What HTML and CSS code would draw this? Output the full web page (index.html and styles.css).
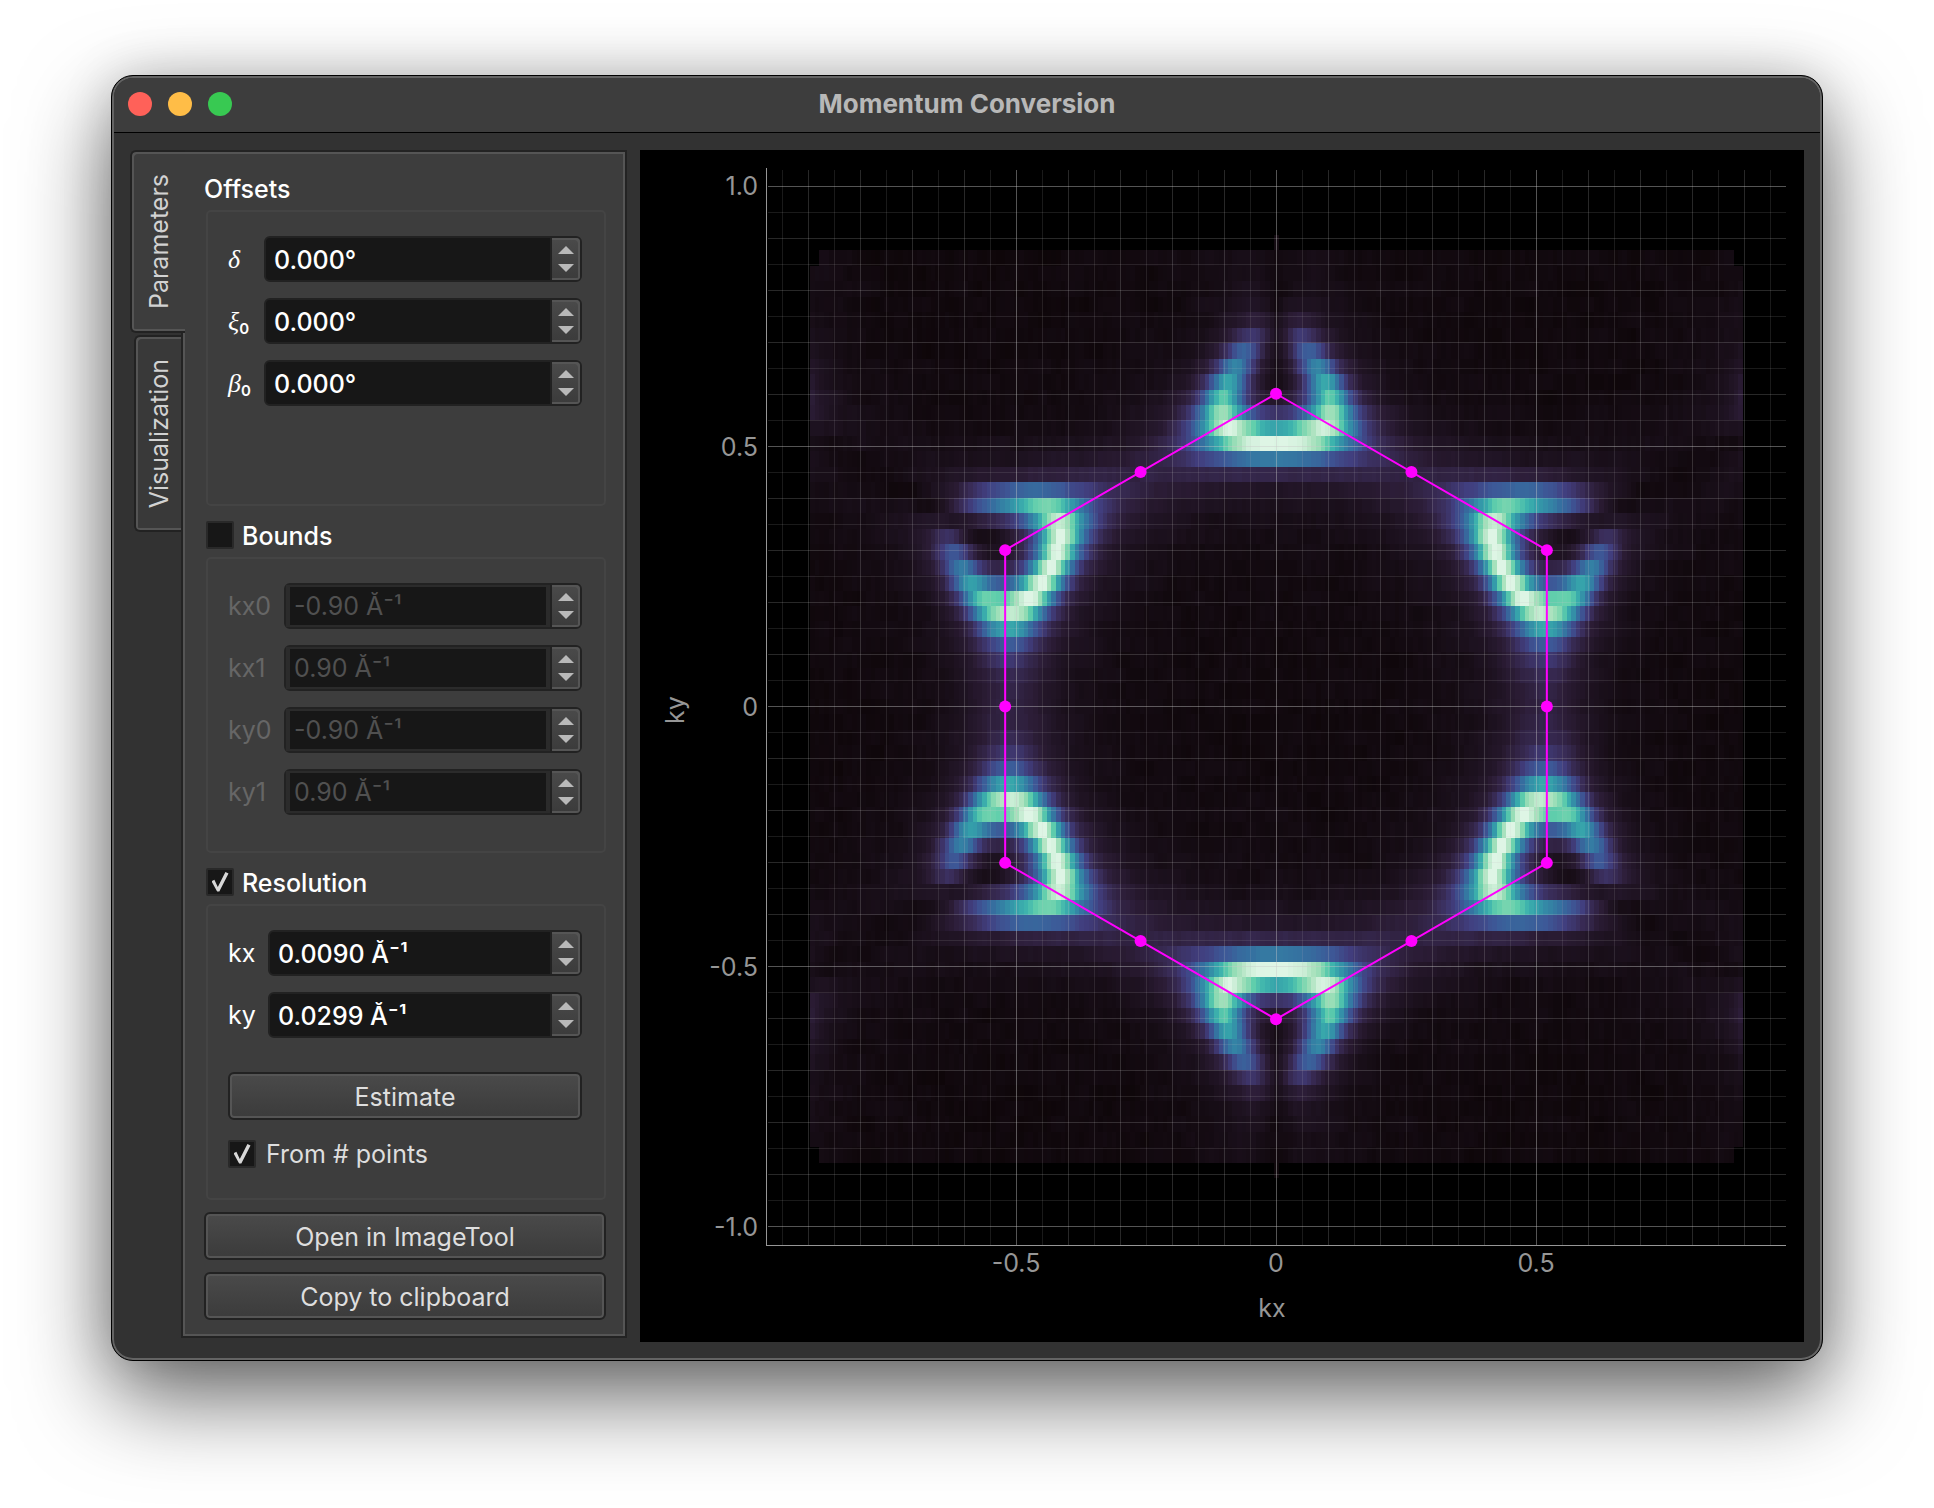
FILE: index.html
```html
<!DOCTYPE html>
<html lang="en">
<head>
  <meta charset="UTF-8">
  <meta name="viewport" content="width=device-width, initial-scale=1.0">
  <title>Momentum Conversion</title>
  <link rel="stylesheet" href="styles.css">
</head>
<body>

  <div class="window">
    <header class="titlebar">
      <div class="lights">
        <button class="light red" aria-label="Close"></button>
        <button class="light yellow" aria-label="Minimize"></button>
        <button class="light green" aria-label="Zoom"></button>
      </div>
      <h1>Momentum Conversion</h1>
    </header>

    <main class="workspace">
      <nav class="tabs">
        <button class="tab active"><span>Parameters</span></button>
        <button class="tab"><span>Visualization</span></button>
      </nav>

      <div class="panel">
        <section class="section">
          <div class="section-head"><h2>Offsets</h2></div>
          <div class="group">
            <div class="form greek">
              <label for="delta"><i>δ</i></label>
              <div class="spin">
                <input type="text" id="delta" value="0.000°">
                <div class="steps"><button class="up" aria-label="Up"></button><button class="down" aria-label="Down"></button></div>
              </div>
              <label for="xi"><i>ξ</i><sub>0</sub></label>
              <div class="spin">
                <input type="text" id="xi" value="0.000°">
                <div class="steps"><button class="up" aria-label="Up"></button><button class="down" aria-label="Down"></button></div>
              </div>
              <label for="beta"><i>β</i><sub>0</sub></label>
              <div class="spin">
                <input type="text" id="beta" value="0.000°">
                <div class="steps"><button class="up" aria-label="Up"></button><button class="down" aria-label="Down"></button></div>
              </div>
            </div>
          </div>
        </section>

        <section class="section">
          <div class="section-head">
            <input type="checkbox" class="check" id="bounds">
            <label for="bounds">Bounds</label>
          </div>
          <div class="group disabled">
            <div class="form bounds">
              <label for="kx0">kx0</label>
              <div class="spin">
                <input type="text" id="kx0" value="-0.90 Å⁻¹" disabled>
                <div class="steps"><button class="up" aria-label="Up"></button><button class="down" aria-label="Down"></button></div>
              </div>
              <label for="kx1">kx1</label>
              <div class="spin">
                <input type="text" id="kx1" value="0.90 Å⁻¹" disabled>
                <div class="steps"><button class="up" aria-label="Up"></button><button class="down" aria-label="Down"></button></div>
              </div>
              <label for="ky0">ky0</label>
              <div class="spin">
                <input type="text" id="ky0" value="-0.90 Å⁻¹" disabled>
                <div class="steps"><button class="up" aria-label="Up"></button><button class="down" aria-label="Down"></button></div>
              </div>
              <label for="ky1">ky1</label>
              <div class="spin">
                <input type="text" id="ky1" value="0.90 Å⁻¹" disabled>
                <div class="steps"><button class="up" aria-label="Up"></button><button class="down" aria-label="Down"></button></div>
              </div>
            </div>
          </div>
        </section>

        <section class="section">
          <div class="section-head">
            <input type="checkbox" class="check" id="resolution" checked>
            <label for="resolution">Resolution</label>
          </div>
          <div class="group">
            <div class="form">
              <label for="kx">kx</label>
              <div class="spin">
                <input type="text" id="kx" value="0.0090 Å⁻¹">
                <div class="steps"><button class="up" aria-label="Up"></button><button class="down" aria-label="Down"></button></div>
              </div>
              <label for="ky">ky</label>
              <div class="spin">
                <input type="text" id="ky" value="0.0299 Å⁻¹">
                <div class="steps"><button class="up" aria-label="Up"></button><button class="down" aria-label="Down"></button></div>
              </div>
            </div>
            <button class="btn estimate">Estimate</button>
            <div class="check-row">
              <input type="checkbox" class="check" id="points" checked>
              <label for="points">From # points</label>
            </div>
          </div>
        </section>

        <div class="actions">
          <button class="btn">Open in ImageTool</button>
          <button class="btn">Copy to clipboard</button>
        </div>
      </div>

      <svg class="plot" viewBox="0 0 1164 1192" role="img" aria-label="Constant energy map">
        <g id="map" shape-rendering="crispEdges"></g>
        <g id="grid" shape-rendering="crispEdges"></g>
        <path class="axis" d="M126 18V1095H1146" shape-rendering="crispEdges"/>
        <g class="ticks-y">
          <text x="118" y="45">1.0</text>
          <text x="118" y="306">0.5</text>
          <text x="118" y="566">0</text>
          <text x="118" y="826">-0.5</text>
          <text x="118" y="1086">-1.0</text>
        </g>
        <g class="ticks-x">
          <text x="376" y="1122">-0.5</text>
          <text x="636" y="1122">0</text>
          <text x="896" y="1122">0.5</text>
          <text x="632" y="1167">kx</text>
          <text transform="translate(44 560) rotate(-90)">ky</text>
        </g>
        <g id="zone"></g>
      </svg>
    </main>
  </div>

  <script src="plot.js"></script>
</body>
</html>
```

FILE: styles.css
```css
* {
  box-sizing: border-box;
}

body {
  margin: 0;
  padding: 75px 111px 147px;
  background: #fff;
  color: #fff;
  font-family: Inter, "Liberation Sans", sans-serif;
  font-size: 25px;
  line-height: 28px;
}

h1, h2 {
  margin: 0;
  font-size: inherit;
}

button, input {
  margin: 0;
  padding: 0;
  border: none;
  font: inherit;
}

/* Window */
.window {
  background: #323232;
  border: 1px solid #000;
  border-radius: 22px;
  box-shadow: inset 0 0 0 2px #646464, 0 36px 90px rgba(0, 0, 0, 0.6), 0 0 50px rgba(0, 0, 0, 0.15);
  padding: 2px;
}

.titlebar {
  height: 55px;
  display: grid;
  grid-template-columns: 1fr auto 1fr;
  align-items: center;
  padding: 0 14px 2px;
  background: #3d3d3d;
  border-bottom: 1px solid #000;
  border-radius: 19px 19px 0 0;
}

.titlebar h1 {
  color: #b8b8b8;
  font-size: 26px;
  font-weight: 700;
}

.lights {
  display: flex;
  gap: 16px;
}

.light {
  width: 24px;
  height: 24px;
  border-radius: 50%;
}

.red { background: #ff6159; }
.yellow { background: #ffbd47; }
.green { background: #38c952; }

.workspace {
  display: flex;
  align-items: stretch;
  padding: 17px 16px 16px;
}

/* Tabs */
.tabs {
  display: flex;
  flex-direction: column;
  align-items: flex-end;
  gap: 2px;
  z-index: 1;
}

.tab {
  display: flex;
  align-items: center;
  justify-content: center;
  width: 47px;
  padding: 22px 0;
  color: #d2d2d2;
  background: #393939;
  border: 2px solid #222;
  border-right: none;
  border-radius: 6px 0 0 6px;
  box-shadow: inset 2px 2px 0 #555, inset 0 -2px 0 #555;
}

.tab span {
  writing-mode: vertical-rl;
  transform: rotate(180deg);
}

.tab.active {
  width: 55px;
  margin-right: -4px;
  background: #3d3d3d;
}

/* Parameter panel */
.panel {
  flex: none;
  width: 446px;
  display: flex;
  flex-direction: column;
  margin: 0 13px 4px 0;
  padding: 7px 19px 16px 21px;
  background: #3d3d3d;
  border: 2px solid #232323;
  box-shadow: inset 0 0 0 2px #555;
}

.section {
  flex: 1;
  display: flex;
  flex-direction: column;
}

.section-head {
  display: flex;
  align-items: center;
  gap: 8px;
  height: 28px;
  margin: 15px 0 8px 2px;
}

.section-head h2,
.section-head label {
  padding-top: 2px;
  font-weight: 500;
}

.section-head h2 {
  margin-left: -2px;
}

.group {
  flex: 1;
  margin-left: 2px;
  padding: 24px 22px 0 20px;
  border: 2px solid #444;
  border-radius: 5px;
}

.form {
  display: grid;
  grid-template-columns: 27px minmax(0, 1fr);
  gap: 16px 13px;
  align-items: center;
}

.form.greek {
  column-gap: 9px;
}

.form.bounds {
  grid-template-columns: 43px minmax(0, 1fr);
}

.form i {
  font-family: "Liberation Serif", serif;
  font-size: 26px;
}

.form sub {
  font-size: 15px;
  font-weight: 600;
  line-height: 0;
  vertical-align: -4px;
}

.spin {
  display: flex;
  height: 46px;
  background: #171717;
  border: 2px solid #222;
  border-radius: 6px;
}

.spin input {
  flex: 1;
  width: 0;
  min-width: 0;
  padding: 2px 8px 0;
  color: #fff;
  background: none;
  font-weight: 500;
}

.disabled label {
  color: #666;
}

.disabled .spin input {
  padding: 0 4px;
  color: #505050;
  border: 2px solid #2b2b2b;
  border-left-width: 4px;
  border-right-width: 4px;
  font-weight: 400;
}

.steps {
  width: 30px;
  display: flex;
  flex-direction: column;
  justify-content: center;
  align-items: center;
  gap: 10px;
  background: linear-gradient(#4a4a4a, #3b3b3b);
  border-left: 2px solid #222;
  border-radius: 0 4px 4px 0;
  box-shadow: inset -2px 2px 0 #555, inset 0 -2px 0 #555;
}

.steps button {
  width: 16px;
  height: 8px;
  background: #b9b9b9;
}

.up { clip-path: polygon(50% 0, 100% 100%, 0 100%); }
.down { clip-path: polygon(0 0, 100% 0, 50% 100%); }

.btn {
  display: block;
  width: 100%;
  height: 48px;
  padding-top: 2px;
  color: #dedede;
  background: linear-gradient(#4a4a4a, #3b3b3b);
  border: 2px solid #222;
  border-radius: 6px;
  box-shadow: inset 0 0 0 2px #555;
}

.btn.estimate {
  margin: 34px 0 20px;
}

.check {
  appearance: none;
  width: 28px;
  height: 28px;
  background: #171717;
  border: 2px solid #292929;
  border-radius: 2px;
  display: grid;
  place-items: center;
}

/* Check mark */
.check:checked::before {
  content: "";
  width: 17px;
  height: 20px;
  background: #d8d8d8;
  clip-path: polygon(0 46%, 17% 39%, 37% 75%, 82% 0, 100% 7%, 46% 98%, 33% 98%);
}

.check-row {
  display: flex;
  align-items: center;
  gap: 10px;
  color: #dedede;
}

.actions {
  display: grid;
  gap: 12px;
  margin-top: 12px;
}

/* Plot */
.plot {
  flex: 1;
  min-width: 0;
  height: auto;
  display: block;
  background: #000;
}

.plot text {
  fill: #969696;
}

.ticks-y {
  text-anchor: end;
}

.ticks-x {
  text-anchor: middle;
}

.axis {
  fill: none;
  stroke: #969696;
  stroke-width: 1;
}

.line {
  fill: none;
  stroke: #f0f;
  stroke-width: 2;
}

.dot {
  fill: #f0f;
}
```

FILE: plot.js
```js
const NS = 'http://www.w3.org/2000/svg';
const X0 = 636.5, Y0 = 556.5, SCALE = 520.4;   // origin and px per 1/Å
const COLS = 201, ROWS = 61, DX = 4.64, DY = 15.46;

function add(parent, tag, attrs) {
  const el = document.createElementNS(NS, tag);
  for (const k in attrs) el.setAttribute(k, attrs[k]);
  parent.appendChild(el);
}

// dark to light colour map
const stops = [
  [11, 4, 5], [28, 17, 30], [43, 28, 53], [57, 44, 87], [65, 62, 126], [61, 88, 151],
  [53, 112, 160], [52, 136, 166], [52, 158, 170], [62, 180, 173], [96, 206, 172],
  [143, 219, 179], [174, 227, 192], [222, 245, 229]
];

function color(v) {
  const t = Math.max(0, Math.min(1, v)) * (stops.length - 1);
  const i = Math.min(stops.length - 2, Math.floor(t));
  const c = stops[i].map((a, n) => Math.round(a + (stops[i + 1][n] - a) * (t - i)));
  return 'rgb(' + c.join(',') + ')';
}

// honeycomb tight binding band, with the sublattice interference term
const A = 6.97, LEVEL = 0.6, WIDTH = 0.18;

function intensity(kx, ky) {
  const p = A * kx / Math.sqrt(3), c = 2 * Math.cos(A * ky / 2);
  const re = Math.cos(p) + c * Math.cos(p / 2);
  const im = Math.sin(p) - c * Math.sin(p / 2);
  const f = Math.hypot(re, im);
  const d = (f - LEVEL) / WIDTH;
  return Math.pow((1 + re / (f + 1e-6)) / 2, 0.45) / (1 + d * d);
}

function blurred(kx, ky) {
  let sum = 0, total = 0;
  for (let i = -2; i <= 2; i++) {
    for (let j = -2; j <= 2; j++) {
      const w = Math.exp(-(i * i + j * j) / 3);
      sum += w * intensity(kx + i * 0.01, ky + j * 0.01);
      total += w;
    }
  }
  return sum / total;
}

let seed = 7;
function noise() {
  seed = (seed * 16807) % 2147483647;
  return seed / 2147483647;
}

function drawMap() {
  const values = [];
  let max = 0;
  for (let r = 0; r < ROWS; r++) {
    for (let c = 0; c < COLS; c++) {
      const v = blurred((c - 100) * DX / SCALE, (30 - r) * DY / SCALE);
      values.push(v);
      max = Math.max(max, v);
    }
  }
  const map = document.getElementById('map');
  for (let r = 0; r < ROWS; r++) {
    const y = Math.round(Y0 + (r - 30.5) * DY);
    const y2 = Math.round(Y0 + (r - 29.5) * DY);
    let n = 0.5;
    for (let c = 0; c < COLS; c++) {
      n = n * 0.6 + noise() * 0.4;
      if ((r === 0 || r === ROWS - 1) && c !== 100) continue;
      if ((r === 1 || r === ROWS - 2) && (c < 2 || c > COLS - 3)) continue;
      const x = Math.round(X0 + (c - 100.5) * DX);
      const x2 = Math.round(X0 + (c - 99.5) * DX);
      const v = values[r * COLS + c] / max;
      add(map, 'rect', { x: x, y: y, width: x2 - x, height: y2 - y, fill: color(v + 0.02 + (n - 0.5) * 0.04) });
    }
  }
}

function drawGrid() {
  const grid = document.getElementById('grid');
  for (let i = -20; i <= 20; i++) {
    const o = i % 10 === 0 ? 0.42 : i % 2 === 0 ? 0.2 : 0.13;
    if (Math.abs(i) < 20) {
      add(grid, 'rect', { x: 636 + i * 26, y: 20, width: 1, height: 1075, fill: '#c8c8c8', opacity: o });
    }
    add(grid, 'rect', { x: 128, y: Math.round(556 - i * 26.02), width: 1018, height: 1, fill: '#c8c8c8', opacity: o });
  }
}

function drawZone() {
  const zone = document.getElementById('zone');
  const K = 4 * Math.PI / 3 / A * SCALE;
  const pts = [];
  for (let i = 0; i < 6; i++) {
    pts.push([636 + K * Math.sin(i * Math.PI / 3), 556.5 - K * Math.cos(i * Math.PI / 3)]);
  }
  add(zone, 'polygon', { class: 'line', points: pts.join(' ') });
  pts.forEach((p, i) => {
    const q = pts[(i + 1) % 6];
    add(zone, 'circle', { class: 'dot', cx: p[0], cy: p[1], r: 6 });
    add(zone, 'circle', { class: 'dot', cx: (p[0] + q[0]) / 2, cy: (p[1] + q[1]) / 2, r: 6 });
  });
}

drawMap();
drawGrid();
drawZone();
```
